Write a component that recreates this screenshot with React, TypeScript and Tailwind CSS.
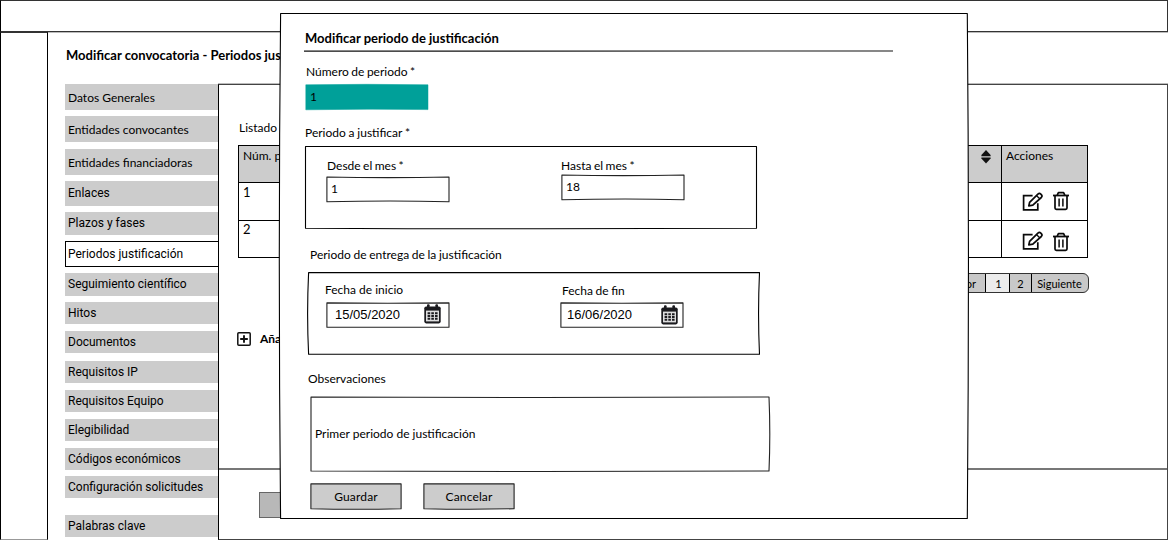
import type { ReactNode } from "react";
import clsx from "clsx";

/* Hand-drawn outline stretched behind the content of its parent box. */
function Outline({ w, h, d, fill = "white", stroke = "#000", line = 1.1 }: { w: number; h: number; d: string; fill?: string; stroke?: string; line?: number }) {
  return (
    <svg className="pointer-events-none absolute inset-0 overflow-visible" width={w} height={h} viewBox={`0 0 ${w} ${h}`} aria-hidden="true">
      <path d={d} fill={fill} stroke={stroke} strokeWidth={line} strokeLinejoin="round" />
    </svg>
  );
}

function EditIcon() {
  return (
    <svg width="22" height="20" viewBox="0 0 22 20" fill="none" stroke="#0a0a0a" strokeWidth="1.7" strokeLinejoin="round">
      <path d="M10.6 3.6H1.6V17.8H15.8V11.2" strokeLinejoin="miter" />
      <path d="M6.8 13.9L7.6 10.4L15.9 2.1Q17.4 0.7 18.8 2.1L19.3 2.6Q20.7 4.1 19.3 5.5L10.8 13.2Z" />
      <path d="M14.6 3.8L17.8 6.8" strokeWidth="1.3" />
    </svg>
  );
}

function TrashIcon() {
  return (
    <svg width="18" height="20" viewBox="0 0 18 20" fill="none" stroke="#0a0a0a" strokeWidth="1.7">
      <path d="M1 4.5H17" strokeWidth="1.8" />
      <path d="M5.2 4.2L6.4 1.6H11.6L12.8 4.2" strokeLinejoin="round" />
      <path d="M3 5V17Q3 18.3 4.4 18.3H13.6Q15 18.3 15 17V5" />
      <path d="M7.1 7.4V15.4M10.9 7.4V15.4" strokeWidth="1.5" />
    </svg>
  );
}

function CalendarIcon() {
  return (
    <svg width="17" height="20" viewBox="0 0 17 20">
      <rect x="0.3" y="2.4" width="16.4" height="17" rx="1.8" fill="#1b1b1f" />
      <rect x="3" y="0.2" width="2.6" height="4" rx="1" fill="#1b1b1f" />
      <rect x="11.4" y="0.2" width="2.6" height="4" rx="1" fill="#1b1b1f" />
      <rect x="2" y="6.6" width="13" height="10.8" fill="#dededf" />
      <path d="M3.6 9.2H13.6M3.6 12H13.6M3.6 14.8H13.6" stroke="#1b1b1f" strokeWidth="2.1" strokeDasharray="2.6 1.1" />
    </svg>
  );
}

function SortIcon() {
  return (
    <svg width="10" height="14" viewBox="0 0 10 14" fill="#111">
      <path d="M5 0L9.6 5V6.2H0.4V5Z" />
      <path d="M5 13.4L9.6 8.6V7.4H0.4V8.6Z" />
    </svg>
  );
}

function PlusBoxIcon() {
  return (
    <svg width="14" height="14" viewBox="0 0 14 14" fill="none" stroke="#111">
      <rect x="0.8" y="0.8" width="12.4" height="12.4" rx="1" strokeWidth="1.5" />
      <path d="M7 3.2V10.8M3.2 7H10.8" strokeWidth="1.9" />
    </svg>
  );
}

const sections = [
  { label: "Datos Generales", box: "h-[26px] pt-[2px] font-['Lato']" },
  { label: "Entidades convocantes", box: "mt-[6px] h-[26px] pt-[2px] font-['Lato']" },
  { label: "Entidades financiadoras", box: "mt-[7px] h-[26px] pt-[2px] font-['Lato']" },
  { label: "Enlaces", box: "mt-[6px] h-[25px] pb-[2px]" },
  { label: "Plazos y fases", box: "mt-[6px] h-[23px] pb-[2px]" },
  { label: "Periodos justificación", box: "mt-[6px] h-[26px]", active: true },
  { label: "Seguimiento científico", box: "mt-[6px] h-[23px] pb-[2px]" },
  { label: "Hitos", box: "mt-[6px] h-[22px]" },
  { label: "Documentos", box: "mt-[7px] h-[22px]" },
  { label: "Requisitos IP", box: "mt-[8px] h-[22px]" },
  { label: "Requisitos Equipo", box: "mt-[7px] h-[22px]" },
  { label: "Elegibilidad", box: "mt-[7px] h-[22px]" },
  { label: "Códigos económicos", box: "mt-[7px] h-[22px]" },
  { label: "Configuración solicitudes", box: "mt-[6px] h-[22px]" },
  { label: "Palabras clave", box: "mt-[17px] h-[22px]" },
];

function SectionNav() {
  return (
    <nav className="flex w-[170px] shrink-0 flex-col pt-px pl-[17px] font-['Roboto'] text-[12px]">
      {sections.map((s) => (
        <a
          key={s.label}
          className={clsx(
            "flex shrink-0 items-center whitespace-nowrap",
            s.active ? "border border-r-0 border-black bg-white pl-[2px]" : "bg-[#ccc] pl-[3px]",
            s.box,
          )}
        >
          {s.label}
        </a>
      ))}
    </nav>
  );
}

function PeriodRow({ n, className, text, edit, trash }: { n: string; className: string; text: string; edit: string; trash: string }) {
  return (
    <div className={clsx("flex border-t border-black", className)}>
      <div className={clsx("w-[762px] pl-[4px] text-[13px]", text)}>{n}</div>
      <div className="flex flex-1 items-start gap-[8px] border-l border-black pl-[20px]">
        <div className={edit}><EditIcon /></div>
        <div className={trash}><TrashIcon /></div>
      </div>
    </div>
  );
}

function PeriodTable() {
  return (
    <div className="flex h-[113px] w-[850px] flex-col border border-black text-[12px]">
      <div className="flex h-[36px] bg-[#ccc]">
        <div className="flex w-[762px] justify-between pt-[2px] pr-[10px] pl-[4px] leading-4">
          <span>Núm. periodo</span>
          <span className="pt-[2px]"><SortIcon /></span>
        </div>
        <div className="flex-1 border-l border-black pt-[2px] pl-[4px] leading-4">Acciones</div>
      </div>
      <PeriodRow n="1" className="h-[38px]" text="leading-[18px]" edit="mt-[9px]" trash="mt-[8px]" />
      <PeriodRow n="2" className="h-[37px]" text="leading-[17px]" edit="mt-[10px]" trash="mt-[11px]" />
    </div>
  );
}

function Pager() {
  const cell = "flex items-center justify-center border-l border-black";
  return (
    <div className="flex h-5 w-[160px] overflow-hidden rounded-md border border-[#333] bg-[#c8c8c8] text-[11px]">
      <div className="flex w-[55px] items-center justify-end pt-[2px] pr-[9px]">Anterior</div>
      <div className={clsx(cell, "w-[24px] bg-[#ececec] pt-[2px] pl-[2px]")}>1</div>
      <div className={clsx(cell, "w-[22px] pt-[2px]")}>2</div>
      <div className={clsx(cell, "flex-1 pt-[2px] pr-px")}>Siguiente</div>
    </div>
  );
}

function Field({ label, children, className }: { label: string; children: ReactNode; className?: string }) {
  return (
    <div className={clsx("flex w-[124px] shrink-0 flex-col", className)}>
      <label className="leading-4 whitespace-nowrap [word-spacing:-0.6px]">{label}</label>
      {children}
    </div>
  );
}

const inputShape = "M0.9 1Q62 2.2 123 1V25.7Q62 24.3 0.9 25.8Z";
const dateShape = "M0.9 0.9Q62 1.6 123 0.9V25.3L0.9 25.3Z";

function Input({ value, className }: { value: string; className?: string }) {
  return (
    <div className={clsx("relative flex h-[26px] items-center pl-[5px]", className)}>
      <Outline w={124} h={26} d={inputShape} stroke="#222" />
      <span className="relative">{value}</span>
    </div>
  );
}

function DateInput({ value, className, icon }: { value: string; className: string; icon: string }) {
  return (
    <div className={clsx("relative flex h-[26px] justify-between", className)}>
      <Outline w={124} h={26} d={dateShape} stroke="#222" />
      <span className="relative pt-[3px] font-['Liberation_Sans'] text-[13px] leading-5">{value}</span>
      <span className={clsx("relative", icon)}><CalendarIcon /></span>
    </div>
  );
}

function Button({ children }: { children: ReactNode }) {
  return (
    <button className="relative flex h-[26px] w-[92px] items-center justify-center pt-[2px] text-[12px] tracking-[0.15px]">
      <Outline w={92} h={26} d="M0.9 0.9H91.1V25.7Q46 26.7 0.9 25.7Z" fill="#ccc" stroke="#222" />
      <span className="relative">{children}</span>
    </button>
  );
}

function PeriodDialog() {
  return (
    <div role="dialog" className="absolute top-[13px] left-[280px] h-[506px] w-[688px] text-[12px]">
      <Outline w={688} h={506} d="M0.6 0.5Q344 1.4 687.3 0.5Q689.6 250 687.3 505.5H0.6Q-2 250 0.6 0.5Z" />
      <div className="relative flex flex-col pt-[15px] pl-6">
        <h2 className="pl-px text-[13px] leading-5 font-bold">Modificar periodo de justificación</h2>
        <svg className="mt-px" width="590" height="4" viewBox="0 0 590 4" fill="none" stroke="#111">
          <path d="M0 2.1Q300 3 589 2" strokeWidth="1.2" />
        </svg>
        <div className="mt-[11px] pl-[2px] leading-4 [word-spacing:-0.6px]">Número de periodo *</div>
        <div className="relative mt-[4px] ml-px flex h-[26px] w-[124px] items-center pl-[5px]">
          <Outline w={124} h={26} d="M0.8 0.8Q62 -0.2 123 0.8V25.6Q62 24.6 0.8 25.8Z" fill="#00a099" stroke="#00a099" line={0.5} />
          <span className="relative">1</span>
        </div>
        <div className="mt-[15px] pl-px leading-4 [word-spacing:-0.3px]">Periodo a justificar *</div>
        <section className="relative mt-[5px] ml-px flex h-[83px] w-[452px] pt-[12px] pl-[21px]">
          <Outline w={452} h={83} d="M0.5 0.5H451.5V82.3Q226 83.3 0.5 82.2Z" />
          <Field label="Desde el mes *" className="relative [&>label]:pl-px">
            <Input value="1" className="mt-[2px]" />
          </Field>
          <Field label="Hasta el mes *" className="relative ml-[111px]">
            <Input value="18" />
          </Field>
        </section>
        <div className="mt-[18px] pl-[6px] leading-4 [word-spacing:-0.4px]">Periodo de entrega de la justificación</div>
        <section className="relative mt-[9px] ml-[4px] flex h-[83px] w-[452px] pl-[18px]">
          <Outline w={452} h={83} d="M0.6 0.6Q226 1.4 451.5 0.6Q449.6 42 451.5 82.3Q226 81.6 0.6 82.3Q-1.4 42 0.6 0.6Z" />
          <div className="relative flex w-[124px] flex-col pt-[10px]">
            <label className="-ml-px leading-4">Fecha de inicio</label>
            <DateInput value="15/05/2020" className="mt-[4px] pr-[9px] pl-[9px]" icon="pt-[2px]" />
          </div>
          <div className="relative ml-[110px] flex w-[124px] flex-col pt-[11px]">
            <label className="pl-[2px] leading-4 [word-spacing:-0.5px]">Fecha de fin</label>
            <DateInput value="16/06/2020" className="mt-[3px] pr-[6px] pl-[7px]" icon="pt-[3px]" />
          </div>
        </section>
        <div className="mt-[16px] pl-[4px] leading-4">Observaciones</div>
        <div className="relative mt-[9px] ml-[6px] flex h-[76px] w-[460px] items-center pl-[5px]">
          <Outline w={460} h={76} d="M1 1Q230 2 459 1Q460.6 38 459 75Q230 76 1 75Z" stroke="#222" />
          <span className="relative">Primer periodo de justificación</span>
        </div>
        <div className="mt-[11px] ml-[6px] flex gap-[21px]">
          <Button>Guardar</Button>
          <Button>Cancelar</Button>
        </div>
      </div>
    </div>
  );
}

export default function App() {
  return (
    <div className="relative flex h-[540px] w-[1168px] flex-col overflow-hidden bg-white font-['Lato'] text-black">
      <header className="h-8 shrink-0 border border-[#333] border-l-black" />
      <div className="flex h-[508px]">
        <aside className="w-12 shrink-0 border border-x-black border-t-[#333] border-b-[#999]" />
        <main className="flex min-w-0 flex-1 flex-col border-t border-[#bbb]">
          <h1 className="mt-[12px] pl-[18px] text-[13px] leading-5 font-bold whitespace-nowrap">
            Modificar convocatoria - Periodos justificación
          </h1>
          <div className="mt-[18px] flex h-[457px]">
            <SectionNav />
            <div className="flex flex-1 flex-col border-t border-[#bbb]">
              <div className="flex flex-1 flex-col border border-[#444] border-l-black">
                <div className="flex h-[383px] flex-col items-start pl-[19px]">
                  <div className="mt-[35px] pl-px text-[12px] leading-4">Listado</div>
                  <div className="mt-[9px]"><PeriodTable /></div>
                  <div className="mt-[15px] ml-[691px]"><Pager /></div>
                  <button className="mt-[38px] -ml-px flex items-center gap-[9px] text-[12px] leading-4 font-bold">
                    <PlusBoxIcon />
                    <span>Añadir</span>
                  </button>
                </div>
                <div className="flex-1 border-t-2 border-[#777] pt-[22px] pl-[40px]">
                  <div className="h-[26px] w-[92px] border border-[#666] bg-[#b8b8b8]" />
                </div>
              </div>
            </div>
          </div>
        </main>
      </div>
      <PeriodDialog />
    </div>
  );
}
